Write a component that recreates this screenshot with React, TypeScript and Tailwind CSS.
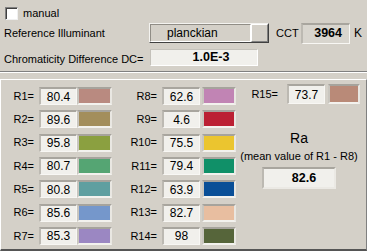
import React from "react";

const F = { fontFamily: '"Liberation Sans", Arial, sans-serif' };

type R = { n: string; v: string; c: string };

const col1: R[] = [
  { n: "R1=", v: "80.4", c: "#b98a80" },
  { n: "R2=", v: "89.6", c: "#a38e5c" },
  { n: "R3=", v: "95.8", c: "#8ba040" },
  { n: "R4=", v: "80.7", c: "#55a573" },
  { n: "R5=", v: "80.8", c: "#5f9fa0" },
  { n: "R6=", v: "85.6", c: "#7597cb" },
  { n: "R7=", v: "85.3", c: "#9b87c2" },
];
const col2: R[] = [
  { n: "R8=", v: "62.6", c: "#c184b4" },
  { n: "R9=", v: "4.6", c: "#bb2033" },
  { n: "R10=", v: "75.5", c: "#ebc52f" },
  { n: "R11=", v: "79.4", c: "#109068" },
  { n: "R12=", v: "63.9", c: "#0a4f97" },
  { n: "R13=", v: "82.7", c: "#e8bea0" },
  { n: "R14=", v: "98", c: "#56653a" },
];

function ValBox({ v, w = "w-[38px]", h = "h-[18px]" }: { v: string; w?: string; h?: string }) {
  return (
    <div
      className={`${w} ${h} flex items-center justify-center bg-[#f1f0ec] border-t-2 border-l-2 border-b border-r border-t-[#a8a59e] border-l-[#bcb9b2] border-b-[#f8f7f4] border-r-[#f8f7f4] text-[12px] text-black leading-none`}
    >
      {v}
    </div>
  );
}

function Swatch({ c, w = "w-[35px]", h = "h-[18px]" }: { c: string; w?: string; h?: string }) {
  return (
    <div className={`${w} ${h} border-2 border-t-[#a6a39c] border-l-[#c9c6bf] border-r-[#e9e7e2] border-b-[#f3f2ee]`}>
      <div className="w-full h-full" style={{ backgroundColor: c }} />
    </div>
  );
}

export default function App() {
  return (
    <div className="w-[367px] h-[251px] bg-[#d4d0c8] text-black text-[11px] overflow-hidden" style={F}>
      {/* top section */}
      <div className="h-[71px] flex flex-col">
        <div className="flex items-center pt-[7px] pl-[5px] h-[20px]">
          <div className="w-[13px] h-[13px] bg-white border-t border-l border-t-[#808080] border-l-[#808080] border-b border-r border-b-[#f0f0f0] border-r-[#f0f0f0] shadow-[inset_1px_1px_0_#404040]" />
          <span className="ml-[5px]">manual</span>
        </div>
        <div className="flex items-center mt-[2px] h-[22px]">
          <span className="w-[149px] pl-[4px]">Reference Illuminant</span>
          <div className="w-[120px] h-[20px] flex border-t border-l border-t-[#f4f3f0] border-l-[#f4f3f0] border-b border-r border-b-[#404040] border-r-[#404040]">
            <div className="w-[101px] h-full border-t border-l border-t-[#908d86] border-l-[#908d86] border-b border-r border-b-[#ffffff] border-r-[#ffffff] pl-[16px] flex items-center text-[12px]">
              planckian
            </div>
            <div className="flex-1 h-full bg-[#d4d0c8] border-t border-l border-t-white border-l-white border-b border-r border-b-[#808080] border-r-[#808080]" />
          </div>
          <span className="w-[25px] ml-[7px]">CCT</span>
          <div className="w-[49px] h-[21px] flex items-center justify-end pr-[7px] border-t-2 border-l-2 border-t-[#a8a59e] border-l-[#bcb9b2] border-b border-r border-b-[#f8f7f4] border-r-[#f8f7f4] bg-[#d8d5ce] font-bold text-[12.5px]">
            3964
          </div>
          <span className="ml-[4px] text-[12px]">K</span>
        </div>
        <div className="flex items-end mt-[5px] h-[17px]">
          <span className="w-[150px] pl-[4px] leading-[13px]">Chromaticity Difference DC=</span>
          <div className="w-[108px] h-[17px] flex items-center justify-center pl-[14px] bg-[#f1f0ec] border-t border-l border-t-[#c4c1ba] border-l-[#c4c1ba] border-b border-r border-b-white border-r-white font-bold text-[12.5px] leading-none">
            1.0E-3
          </div>
        </div>
      </div>
      <div className="h-px bg-[#808080]" />
      <div className="h-px bg-white" />
      {/* lower panel */}
      <div className="mt-[6px] h-[172px] flex border-t border-l border-t-white border-l-white border-b-2 border-b-[#555] border-r border-r-[#808080]">
        <div className="pt-[7px] h-[158px] box-content flex flex-col justify-between">
          {col1.map((r) => (
            <div key={r.n} className="flex items-center h-[18px]">
              <span className="w-[33px] text-right">{r.n}</span>
              <div className="ml-[5px]">
                <ValBox v={r.v} />
              </div>
              <Swatch c={r.c} />
            </div>
          ))}
        </div>
        <div className="pt-[7px] h-[158px] box-content flex flex-col justify-between">
          {col2.map((r) => (
            <div key={r.n} className="flex items-center h-[18px]">
              <span className="w-[45px] text-right">{r.n}</span>
              <div className="ml-[5px]">
                <ValBox v={r.v} />
              </div>
              <div className="ml-[2px]">
                <Swatch c={r.c} w="w-[34px]" />
              </div>
            </div>
          ))}
        </div>
        <div className="pt-[4px] flex flex-col">
          <div className="flex items-center h-[20px]">
            <span className="w-[42px] text-right">R15=</span>
            <div className="ml-[9px]">
              <ValBox v="73.7" h="h-[20px]" />
            </div>
            <div className="ml-[3px]">
              <Swatch c="#b98a78" w="w-[32px]" h="h-[20px]" />
            </div>
          </div>
          <div className="w-[126px] flex flex-col items-center">
            <div className="mt-[26px] text-[14px] leading-[16px]">Ra</div>
            <div className="mt-[4px] leading-[13px] whitespace-nowrap">(mean value of R1 - R8)</div>
            <div className="mt-[4px] w-[74px] h-[22px] flex items-center justify-center pl-[10px] bg-[#f1f0ec] border-t-2 border-l-2 border-t-[#a8a59e] border-l-[#bcb9b2] border-b-2 border-r-2 border-b-[#ebe9e4] border-r-[#ebe9e4] font-bold text-[12.5px] leading-none">
              82.6
            </div>
          </div>
        </div>
      </div>
    </div>
  );
}
